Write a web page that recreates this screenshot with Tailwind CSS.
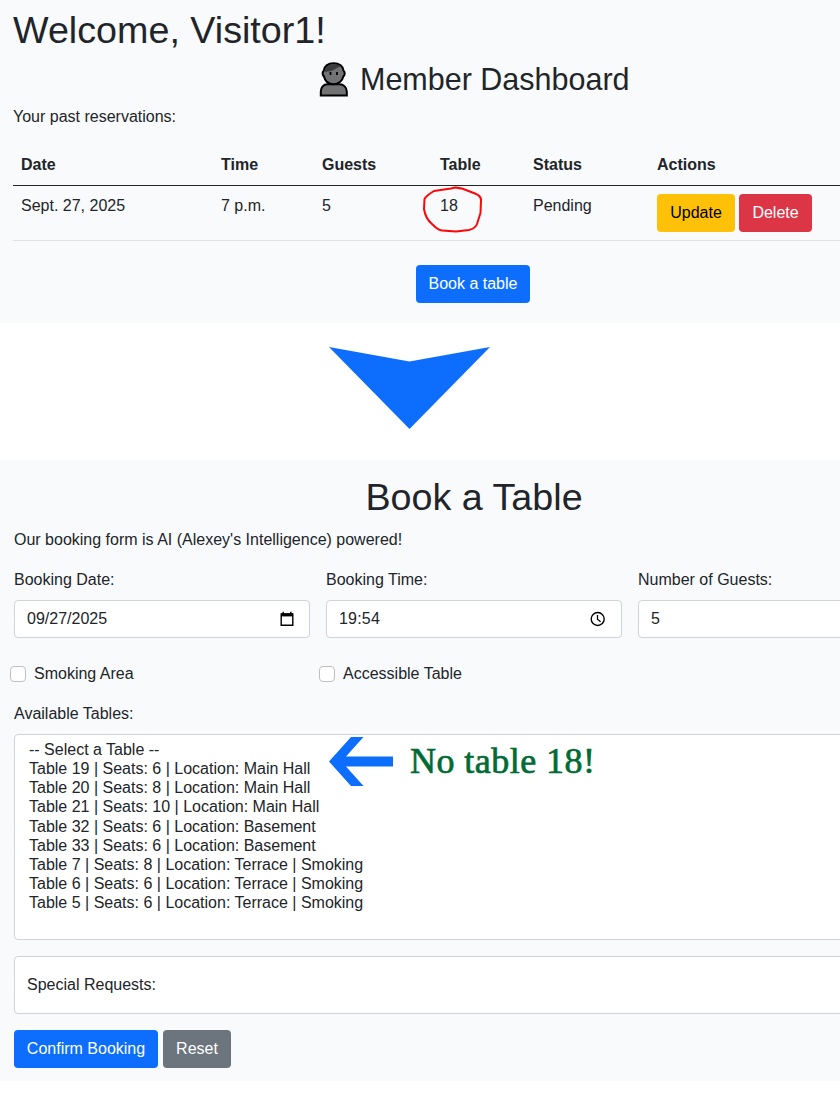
<!DOCTYPE html>
<html lang="en">
<head>
<meta charset="utf-8">
<title>Book a Table</title>
<script src="https://cdn.jsdelivr.net/npm/@tailwindcss/browser@4"></script>
</head>
<body class="w-[840px] h-[1099px] overflow-hidden bg-white font-['Liberation_Sans',Arial,sans-serif] text-base text-[#212529]">
<section class="h-[323px] bg-[#f9fafc] pl-[13px] pt-[6px] overflow-hidden">
  <h1 class="text-[37.700px] leading-[48px] whitespace-nowrap">Welcome, Visitor1!</h1>
  <h2 class="mt-[6px] ml-[306px] flex h-[38px] text-[30.500px] leading-[38px] whitespace-nowrap">
    <svg class="mt-[2px] mr-[11px] w-[30px] h-[35px] shrink-0" viewBox="0 0 30 35">
      <path d="M1.800 33.500V29.500C1.800 25.500 4.500 22.300 8.500 22.300H20.500C24.500 22.300 27.800 25.500 27.800 29.500V33.500Z" fill="#737373" stroke="#000" stroke-width="2"/>
      <path d="M14.500 1.200C9 1.200 5 4.500 4.700 8.800C3.200 9.800 3.200 13 4.900 14.200C6 19 9.500 22.300 14.500 22.300S23.300 19 24.400 14.200C26.100 13 26.100 9.800 24.600 8.800C24.200 4.500 20.500 1.200 14.500 1.200Z" fill="#737373" stroke="#000" stroke-width="2"/>
      <path d="M5.700 9.800C6 5 9.500 2.100 14.500 2.100C17.500 2.100 20 3.100 21.500 4.700C17 5 16 9.500 5.700 9.800Z" fill="#3c3c3c"/>
      <path d="M11.500 9.900v3M18 9.900v3" stroke="#000" stroke-width="1.800"/>
    </svg>
    <span>Member Dashboard</span>
  </h2>
  <p class="mt-[7px] leading-6">Your past reservations:</p>
  <table class="mt-4 w-[920px] table-fixed text-left border-collapse">
    <colgroup><col class="w-[200px]"><col class="w-[101px]"><col class="w-[118px]"><col class="w-[93px]"><col class="w-[124px]"><col></colgroup>
    <thead>
      <tr class="h-[40px] border-b border-[#212529] leading-6">
        <th class="px-2 py-0 pt-px">Date</th><th class="px-2 py-0 pt-px">Time</th><th class="px-2 py-0 pt-px">Guests</th><th class="px-2 py-0 pt-px">Table</th><th class="px-2 py-0 pt-px">Status</th><th class="px-2 py-0 pt-px">Actions</th>
      </tr>
    </thead>
    <tbody>
      <tr class="h-[55px] border-b border-[#dee2e6] align-top leading-6">
        <td class="px-2 pt-2">Sept. 27, 2025</td><td class="px-2 pt-2">7 p.m.</td><td class="px-2 pt-2">5</td>
        <td class="relative px-2 pt-2">18
          <svg class="absolute left-[-10px] top-0 w-[62px] h-[48px]" viewBox="0 0 62 48" fill="none" stroke="#fb0707" stroke-width="2" stroke-linejoin="round" stroke-linecap="round"><path d="M39 2.500L33 1.500L29 2.500L12 5C7 8 4 10 2.500 13L2 23C3 29 5 34 10 38C14 42 17 44.500 20 44.500L34 45.500L47 44C51 43 54 41 55 38L58.500 27L59 14C59 11 57 9 53 7.500L40 2.500L34 1.500"/></svg>
        </td>
        <td class="px-2 pt-2">Pending</td>
        <td class="px-2 pt-2"><div class="flex gap-1">
          <button class="h-[38px] w-[78px] rounded bg-[#ffc107] text-black">Update</button>
          <button class="h-[38px] w-[73px] rounded bg-[#dc3545] text-white">Delete</button>
        </div></td>
      </tr>
    </tbody>
  </table>
  <button class="mt-6 ml-[403px] h-[38px] w-[114px] rounded bg-[#0d6efd] text-white">Book a table</button>
</section>

<div class="h-[137px] pt-[24px] pl-[329px]">
  <svg class="w-[162px] h-[83px]" viewBox="0 0 162 83"><path d="M0 0L80.500 14.500L161 0L80.500 82Z" fill="#0d6efd"/></svg>
</div>

<section class="h-[621px] bg-[#f9fafc] pl-[14px] pt-[13px] overflow-hidden">
  <h1 class="w-[920px] text-center text-[37.700px] leading-[48px]">Book a Table</h1>
  <p class="mt-[7px] leading-6">Our booking form is AI (Alexey's Intelligence) powered!</p>
  <div class="mt-4 flex w-[920px] gap-4 leading-6">
    <div class="w-[296px]">
      <div>Booking Date:</div>
      <div class="mt-2 flex h-[38px] items-center justify-between rounded border border-[#ced4da] bg-white pl-3 pr-[14px]">
        <span>09/27/2025</span>
        <svg class="w-4 h-4 -mt-px" viewBox="0 0 16 16"><path d="M2.200 3H13.800V14.300H2.200ZM4.200 .8V3M11.800 .8V3" fill="none" stroke="#000" stroke-width="1.400"/><path d="M2 2.500H14V5.400H2Z"/></svg>
      </div>
    </div>
    <div class="w-[296px]">
      <div>Booking Time:</div>
      <div class="mt-2 flex h-[38px] items-center justify-between rounded border border-[#ced4da] bg-white pl-3 pr-[15px]">
        <span class="tracking-[0.200px]">19:54</span>
        <svg class="w-4 h-4 -mt-px" viewBox="0 0 16 16" fill="none" stroke="#000"><circle cx="7.700" cy="8" r="6.500" stroke-width="1.400"/><path d="M7.500 4V8.200L10.600 10.800" stroke-width="1.300"/></svg>
      </div>
    </div>
    <div class="w-[296px]">
      <div>Number of Guests:</div>
      <div class="mt-2 flex h-[38px] items-center rounded border border-[#ced4da] bg-white px-3">5</div>
    </div>
  </div>
  <div class="mt-6 -ml-1 flex leading-6">
    <label class="flex w-[309px] items-start gap-2"><span class="mt-1 h-4 w-4 rounded border border-[#bfbfbf] bg-white"></span>Smoking Area</label>
    <label class="flex items-start gap-2"><span class="mt-1 h-4 w-4 rounded border border-[#bfbfbf] bg-white"></span>Accessible Table</label>
  </div>
  <div class="mt-4 leading-6">Available Tables:</div>
  <div class="relative mt-2 h-[206px] w-[920px] rounded border border-[#ced4da] bg-white pl-[14px] pt-[5px] leading-[19.140px] whitespace-nowrap">
    <div>-- Select a Table --</div>
    <div>Table 19 | Seats: 6 | Location: Main Hall</div>
    <div>Table 20 | Seats: 8 | Location: Main Hall</div>
    <div>Table 21 | Seats: 10 | Location: Main Hall</div>
    <div>Table 32 | Seats: 6 | Location: Basement</div>
    <div>Table 33 | Seats: 6 | Location: Basement</div>
    <div>Table 7 | Seats: 8 | Location: Terrace | Smoking</div>
    <div>Table 6 | Seats: 6 | Location: Terrace | Smoking</div>
    <div>Table 5 | Seats: 6 | Location: Terrace | Smoking</div>
    <div class="absolute left-[314px] top-[2px] flex">
      <svg class="w-[64px] h-[49px]" viewBox="0 0 64 49"><path d="M22 0H34.500L17 19.500H64V29.500H17L34.500 49H22L0 24.500Z" fill="#0d6efd"/></svg>
      <span class="ml-[17px] font-['Liberation_Serif',serif] text-[36px] leading-[48px] tracking-[0.450px] text-[#006b34] [-webkit-text-stroke:0.700px_#006b34]">No table 18!</span>
    </div>
  </div>
  <div class="mt-4 flex h-[58px] w-[920px] items-center rounded border border-[#ced4da] bg-white px-3">Special Requests:</div>
  <div class="mt-4 flex gap-[5px]">
    <button class="h-[38px] w-[144px] rounded bg-[#0d6efd] text-white">Confirm Booking</button>
    <button class="h-[38px] w-[68px] rounded bg-[#6c757d] text-white">Reset</button>
  </div>
</section>
</body>
</html>
